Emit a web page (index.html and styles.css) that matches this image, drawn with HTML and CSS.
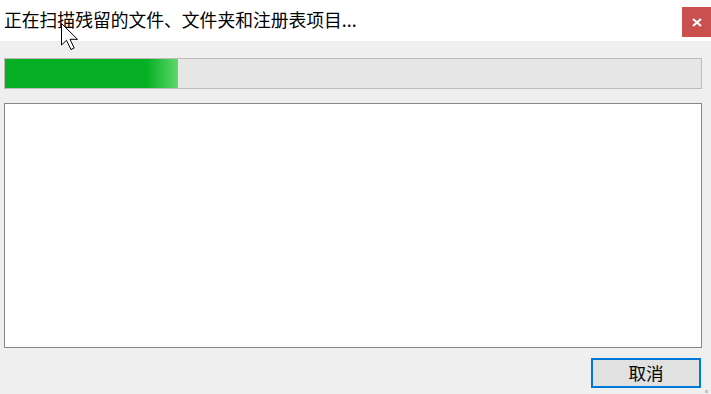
FILE: index.html
```html
<!DOCTYPE html>
<html>

<head>
    <meta charset="utf-8">
    <link rel="stylesheet" href="styles.css">
</head>

<body>
    <div class="window">
        <!-- Header -->
        <div class="header">
            <span class="title">正在扫描残留的文件、文件夹和注册表项目...</span>
            <div class="close-btn">
                <svg width="10" height="9" viewBox="0 0 10 9">
                    <path d="M1 1 L9 8 M9 1 L1 8" stroke="#fff" stroke-width="2.2" />
                </svg>
            </div>
        </div>

        <!-- Body -->
        <div class="content">
            <div class="progress">
                <div class="progress-fill" style="width: 173px"></div>
            </div>
            <div class="list-box"></div>
            <div class="footer">
                <button class="btn">取消</button>
            </div>
        </div>
        <div class="grip"></div>

        <svg class="cursor" width="19" height="28" viewBox="0 0 19 28">
            <path d="M0.5 0.5 L0.5 22 L5.5 17.3 L10 26.5 L13.2 25 L9 16.3 L16.5 16.3 Z" fill="#fff" stroke="#000" stroke-width="1" stroke-linejoin="miter" />
        </svg>
    </div>
</body>

</html>
```

FILE: styles.css
```css
html,
body {
    margin: 0;
    padding: 0;
}

body {
    font-family: "Noto Sans CJK SC", "Liberation Sans", sans-serif;
    background: #efefef;
}

.window {
    position: relative;
    width: 711px;
    height: 394px;
    background: #efefef;
    overflow: hidden;
}

.header {
    height: 41px;
    background: #fff;
    display: flex;
    justify-content: space-between;
    align-items: flex-start;
}

.title {
    font-size: 17.8px;
    line-height: 22px;
    color: #000;
    padding: 8px 0 0 4px;
}

.close-btn {
    width: 29px;
    height: 30px;
    margin-top: 7px;
    background: #c9504f;
    display: flex;
    align-items: center;
    justify-content: center;
}

.content {
    padding: 17px 9px 0 4px;
}

.progress {
    height: 29px;
    border: 1px solid #bcbcbc;
    background: #e6e6e6;
}

.progress-fill {
    height: 100%;
    background: linear-gradient(to right, #06b025 0%, #06b025 82%, #5fd86b 100%);
}

.list-box {
    margin-top: 14px;
    height: 243px;
    border: 1px solid #828790;
    background: #fff;
}

.footer {
    display: flex;
    justify-content: flex-end;
    padding: 10px 1px 0 0;
}

.btn {
    width: 110px;
    height: 30px;
    border: 2px solid #0078d7;
    background: #e1e1e1;
    font-family: "Noto Sans CJK SC", sans-serif;
    font-size: 17.6px;
    color: #000;
    padding: 0;
    line-height: 24px;
}

.grip {
    position: absolute;
    right: 3px;
    bottom: 1px;
    width: 3px;
    height: 3px;
    background: #c4c4c4;
}

.cursor {
    position: absolute;
    left: 61px;
    top: 23px;
}
```
